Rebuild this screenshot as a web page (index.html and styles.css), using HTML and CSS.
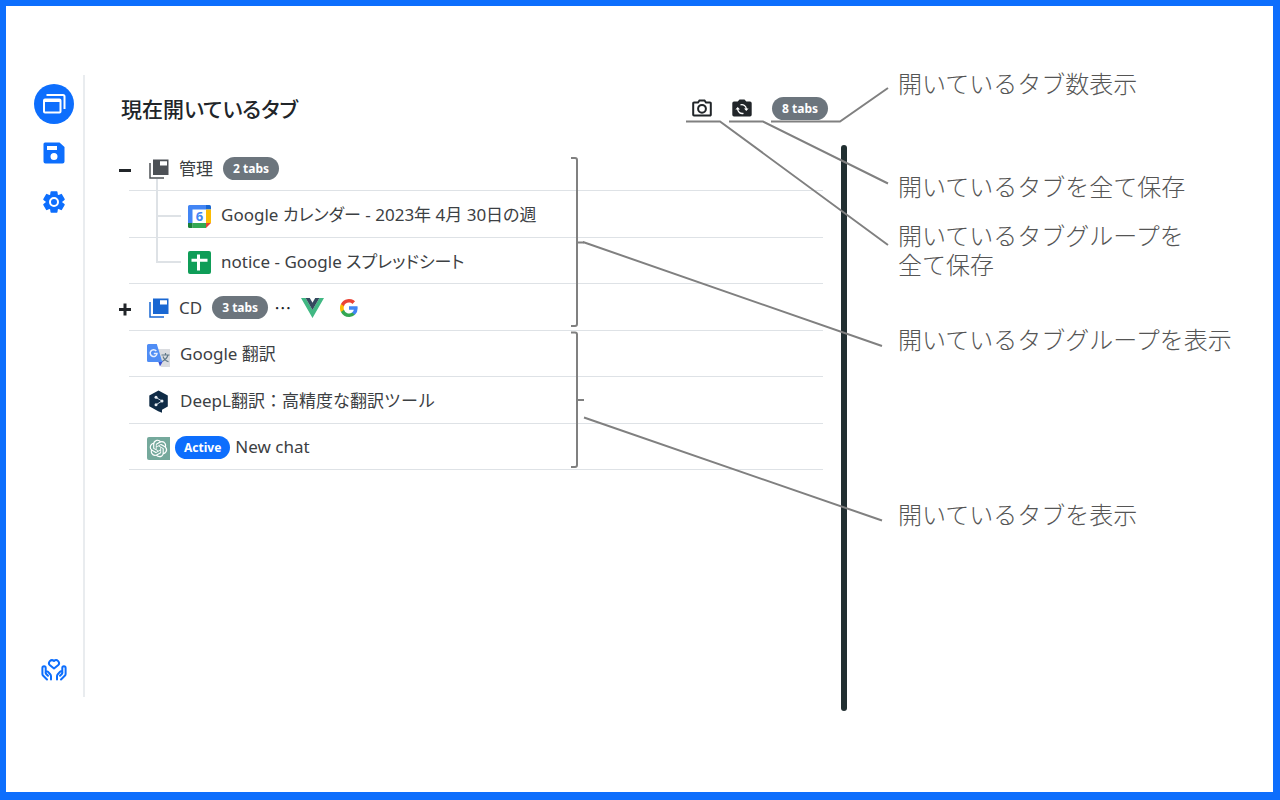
FILE: index.html
```html
<!DOCTYPE html>
<html lang="ja">
<head>
<meta charset="utf-8">
<meta name="viewport" content="width=device-width, initial-scale=1">
<title>現在開いているタブ</title>
<link rel="stylesheet" href="styles.css">
</head>
<body>
<div class="stage">
  <nav class="sidebar" aria-label="メニュー">
    <button class="nav-button nav-button-active" type="button" aria-label="タブ">
      <svg width="24" height="24" viewBox="0 0 24 24" fill="none" stroke="currentColor"><path d="M4.500 3H21a1.500 1.500 0 0 1 1.500 1.500V17" stroke-width="2"/><rect x="2" y="7.500" width="16.500" height="13" rx="1" stroke-width="2"/><path d="M2 8.500h16.500" stroke-width="3"/></svg>
    </button>
    <button class="nav-button" type="button" aria-label="保存">
      <svg width="22" height="22" viewBox="0 0 22 22"><path fill="currentColor" fill-rule="evenodd" d="M2 .500h14.500L21.500 5v14.500a2 2 0 0 1-2 2H2.500a2 2 0 0 1-2-2V2A1.500 1.500 0 0 1 2 .500ZM4 4v4h10V4ZM11 11a3.500 3.500 0 1 0 0 7 3.500 3.500 0 0 0 0-7Z"/></svg>
    </button>
    <button class="nav-button" type="button" aria-label="設定">
      <svg width="24" height="24" viewBox="0 0 24 24"><path fill="currentColor" stroke="currentColor" stroke-width="1.500" stroke-linejoin="round" d="m9.250 22-.4-3.200q-.325-.125-.612-.3-.288-.175-.563-.375L4.700 19.375l-2.750-4.750 2.575-1.950Q4.500 12.500 4.500 12.337v-.675q0-.162.025-.337L1.950 9.375l2.750-4.750 2.975 1.250q.275-.2.575-.375.3-.175.600-.3l.4-3.200h5.500l.4 3.200q.325.125.613.300.287.175.562.375l2.975-1.250 2.750 4.750-2.575 1.950q.025.175.025.337v.675q0 .163-.05.338l2.575 1.950-2.750 4.750-2.950-1.250q-.275.200-.575.375-.3.175-.6.300l-.4 3.200Z"/><circle cx="12" cy="12" r="4" fill="none" stroke="#fff" stroke-width="2"/></svg>
    </button>
    <button class="nav-button nav-button-last" type="button" aria-label="寄付">
      <svg width="28" height="24" viewBox="0 0 28 24" fill="none" stroke="currentColor" stroke-width="2" stroke-linecap="round" stroke-linejoin="round"><path d="M14 10.500 10 7.300A2.900 2.900 0 0 1 14 3a2.900 2.900 0 0 1 4 4.300Z"/><path d="M7 21.500 3 17.500a2 2 0 0 1-.6-1.400V10a1.500 1.500 0 0 1 3.300 0v4.300M11 21.500v-3.300a3 3 0 0 0-.8-2l-2.100-2.300a1.400 1.400 0 0 0-2.100 1.900l2 2M21 21.500l4-4a2 2 0 0 0 .6-1.400V10a1.500 1.500 0 0 0-3.300 0v4.300M17 21.500v-3.300a3 3 0 0 1 .8-2l2.100-2.300a1.400 1.400 0 0 1 2.100 1.900l-2 2"/></svg>
    </button>
  </nav>

  <main class="main">
    <header class="header">
      <h1 class="title">現在開いているタブ</h1>
      <button class="tool" type="button" aria-label="タブグループを全て保存">
        <svg width="20" height="18" viewBox="0 0 20 18" fill="none" stroke="currentColor" stroke-width="2"><path d="M2 3.500h4L7.500 1.500h5L14 3.500h4a.8.800 0 0 1 .8.800v11.400a.8.800 0 0 1-.8.800H2a.8.800 0 0 1-.8-.8V4.300A.8.800 0 0 1 2 3.500Z"/><circle cx="10" cy="9.800" r="3.900"/></svg>
      </button>
      <button class="tool" type="button" aria-label="タブを全て保存">
        <svg width="20" height="18" viewBox="0 0 20 18" fill="none"><path fill="currentColor" d="M2 2.500h3.700L7.500.500h5l1.800 2H18a1.700 1.700 0 0 1 1.700 1.700v11.600a1.700 1.700 0 0 1-1.700 1.700H2A1.700 1.700 0 0 1 .3 15.800V4.200A1.700 1.700 0 0 1 2 2.500Z"/><path d="M8.500 5.800A4.500 4.500 0 0 1 14.300 10M11.500 14.300A4.500 4.500 0 0 1 5.700 10" stroke="#fff" stroke-width="1.300"/><path d="m12 9.500 2.300 2.600 2.300-2.600ZM3.400 10.500l2.300-2.600 2.300 2.600Z" fill="#fff"/></svg>
      </button>
      <span class="badge">8 tabs</span>
    </header>

    <ul class="tabs">
      <li class="row">
        <button class="toggle" type="button" aria-label="閉じる"><svg width="14" height="14" viewBox="0 0 14 14"><path d="M1 7.500h12" stroke="currentColor" stroke-width="3"/></svg></button>
        <svg class="group-icon" width="20" height="20" viewBox="0 0 20 20"><path d="M1 4v15h14" fill="none" stroke="currentColor" stroke-width="1.500"/><path fill="currentColor" fill-rule="evenodd" d="M4 .500h15.500V16H4ZM11 2.200v4.300h7V2.200Z"/></svg>
        <span class="label">管理</span>
        <span class="badge">2 tabs</span>
      </li>
      <li class="row row-child">
        <svg class="favicon" width="23" height="23" viewBox="0 0 23 23"><path fill="#fff" d="M4 4h15v15H4z"/><path fill="#4285f4" d="M1.500 0H18v4.500H4.500V18H0V1.500A1.500 1.500 0 0 1 1.500 0Z"/><path fill="#1967d2" d="M18 0h3.500A1.500 1.500 0 0 1 23 1.500v3h-5Z"/><path fill="#fbbc04" d="M18 4.500h5V18h-5Z"/><path fill="#34a853" d="M4.500 18H18v5H4.500Z"/><path fill="#188038" d="M0 18h4.500v5h-3A1.500 1.500 0 0 1 0 21.500Z"/><path fill="#ea4335" d="M18 18h5l-5 5Z"/><text class="calendar-day" x="11.500" y="16" text-anchor="middle">6</text></svg>
        <a class="label" href="#calendar">Google カレンダー - 2023年 4月 30日の週</a>
      </li>
      <li class="row row-child">
        <svg class="favicon" width="23" height="23" viewBox="0 0 23 23"><rect width="23" height="23" rx="2" fill="#0f9d58"/><path d="M10.500 3.500v16M3.500 9.200h16" stroke="#fff" stroke-width="3"/></svg>
        <a class="label" href="#notice">notice - Google スプレッドシート</a>
      </li>
      <li class="row">
        <button class="toggle" type="button" aria-label="開く"><svg width="14" height="14" viewBox="0 0 14 14"><path d="M1 7.500h12M7 1.500v12" stroke="currentColor" stroke-width="3"/></svg></button>
        <svg class="group-icon group-icon-blue" width="20" height="20" viewBox="0 0 20 20"><path d="M1 4v15h14" fill="none" stroke="currentColor" stroke-width="1.500"/><path fill="currentColor" fill-rule="evenodd" d="M4 .500h15.500V16H4ZM11 2.200v4.300h7V2.200Z"/></svg>
        <span class="label">CD</span>
        <span class="badge">3 tabs</span>
        <span class="more">…</span>
        <svg class="mini" width="23" height="20" viewBox="0 0 23 20"><path fill="#41b883" d="M0 0h4.600l6.900 12 6.900-12H23L11.500 20Z"/><path fill="#34495e" d="M4.600 0h4.200l2.700 4.700L14.200 0h4.200l-6.900 12Z"/></svg>
        <svg class="mini" width="18" height="18" viewBox="0 0 18 18"><path fill="#4285f4" d="M17.640 9.200c0-.64-.06-1.250-.16-1.840H9v3.480h4.840a4.140 4.140 0 0 1-1.800 2.720v2.260h2.920a8.780 8.780 0 0 0 2.680-6.620Z"/><path fill="#34a853" d="M9 18a8.600 8.600 0 0 0 5.960-2.180l-2.920-2.260A5.400 5.400 0 0 1 3.960 10.710h-3v2.330A9 9 0 0 0 9 18Z"/><path fill="#fbbc05" d="M3.960 10.710a5.400 5.400 0 0 1 0-3.420V4.960h-3a9 9 0 0 0 0 8.080Z"/><path fill="#ea4335" d="M9 3.580c1.320 0 2.500.45 3.440 1.350l2.580-2.580A9 9 0 0 0 .96 4.960l3 2.330A5.360 5.360 0 0 1 9 3.580Z"/></svg>
      </li>
      <li class="row row-tab">
        <svg class="favicon" width="23" height="23" viewBox="0 0 23 23"><path fill="#dadce0" d="M10 5h13v18H14Z"/><path d="M14.500 11h8M18.500 9v2M21 11c-.8 3-3 5-5.500 6.200M16 12.500c1 2.500 3 4.500 5.500 5.200" stroke="#607988" stroke-width="1.200" fill="none"/><path fill="#3b50ce" d="M11 17h5l-3 5.500Z"/><path fill="#4f8df5" d="M1.500 0h8.300l5.500 18H1.500A1.500 1.500 0 0 1 0 16.500v-15A1.500 1.500 0 0 1 1.500 0Z"/><path d="M9.300 7A3.400 3.400 0 1 0 10 9.500H6.800" fill="none" stroke="#e8f0fe" stroke-width="1.500"/></svg>
        <a class="label" href="#translate">Google 翻訳</a>
      </li>
      <li class="row row-tab">
        <svg class="favicon" width="23" height="23" viewBox="0 0 23 23"><path fill="#0f2b46" d="m11.500.500 9.300 5v11L15 19.700V22.800l-3.800-1.600L2.300 16.300V5.500Z"/><path d="m9 7.500 6 3.500-6 3.800" fill="none" stroke="#c9d6e2" stroke-width="1"/><g fill="#e6edf3"><circle cx="9" cy="7.300" r="1.500"/><circle cx="15" cy="11" r="1.500"/><circle cx="9" cy="14.800" r="1.500"/></g></svg>
        <a class="label label-full" href="#deepl">DeepL翻訳：高精度な翻訳ツール</a>
      </li>
      <li class="row row-tab">
        <svg class="favicon" width="23" height="23" viewBox="0 0 23 23"><path fill="#75a99c" d="M2 0h21v23H2a2 2 0 0 1-2-2V2a2 2 0 0 1 2-2Z"/><g transform="translate(2.700 2.700) scale(.73)"><path fill="#fff" d="M22.280 9.820a5.980 5.980 0 0 0-.52-4.910 6.050 6.050 0 0 0-6.510-2.900A6.070 6.070 0 0 0 4.980 4.180a5.980 5.980 0 0 0-4 2.900 6.050 6.050 0 0 0 .74 7.100 5.980 5.980 0 0 0 .51 4.910 6.050 6.050 0 0 0 6.520 2.900A5.980 5.980 0 0 0 13.260 24a6.060 6.060 0 0 0 5.770-4.210 5.990 5.990 0 0 0 4-2.900 6.060 6.060 0 0 0-.75-7.070Zm-9.020 12.610a4.480 4.480 0 0 1-2.880-1.040l4.920-2.840a.8.800 0 0 0 .39-.68v-6.740l2.020 1.170v5.630a4.500 4.500 0 0 1-4.450 4.500Zm-9.660-4.130a4.470 4.470 0 0 1-.53-3.010l4.920 2.840a.77.770 0 0 0 .78 0l5.840-3.370v2.330L9.740 19.950a4.500 4.500 0 0 1-6.140-1.650ZM2.340 7.900a4.490 4.490 0 0 1 2.370-1.980v5.680a.77.770 0 0 0 .39.680l5.810 3.350-2.020 1.170-4.830-2.790A4.500 4.500 0 0 1 2.340 7.900Zm16.600 3.850-5.840-3.380 2.010-1.160 4.830 2.790a4.500 4.500 0 0 1-.68 8.100v-5.670a.79.790 0 0 0-.32-.68Zm2.010-3.020-4.910-2.870a.78.780 0 0 0-.79 0L9.410 9.230V6.900l4.860-2.810a4.500 4.500 0 0 1 6.680 4.640ZM8.310 12.860 6.290 11.700V6.070a4.500 4.500 0 0 1 7.380-3.450L8.840 5.460a.8.800 0 0 0-.4.680Zm1.100-2.360L12 9l2.610 1.500v3L12 15l-2.600-1.500Z"/></g></svg>
        <span class="badge badge-active">Active</span>
        <a class="label" href="#chat">New chat</a>
      </li>
    </ul>
  </main>

  <div class="divider"></div>

  <ul class="notes">
    <li class="note">開いているタブ数表示</li>
    <li class="note note-save-tabs">開いているタブを全て保存</li>
    <li class="note note-save-groups">開いているタブグループを<br>全て保存</li>
    <li class="note note-groups">開いているタブグループを表示</li>
    <li class="note note-tabs">開いているタブを表示</li>
  </ul>

  <svg class="callouts" width="720" height="600" viewBox="560 0 720 600" aria-hidden="true">
    <path d="M771 121.500h69L888 88M729 121.500h34L888 183.500M686 121.500h34L888 245M583 242 882 346M584 417.500 882 520.500"/>
    <path d="M571 158h4q2 0 2 2v81.500q0 1 2 1h5M577 242v82q0 2-2 2h-4M571 332.500h4q2 0 2 2v64.500q0 1 2 1h5M577 399v66q0 2-2 2h-4"/>
  </svg>
</div>
</body>
</html>
```

FILE: styles.css
```css
* {
  box-sizing: border-box;
}

body {
  margin: 0;
  background: #fff;
  color: #212529;
  font-family: "Noto Sans", "Noto Sans CJK JP", sans-serif;
  font-size: 17px;
}

.stage {
  position: relative;
  display: flex;
  min-height: 100vh;
  padding: 69px 0 81px 22px;
  border: solid #0d6efd;
  border-width: 6px 7px 8px 6px;
}

button {
  display: flex;
  align-items: center;
  justify-content: center;
  padding: 0;
  border: 0;
  background: none;
  color: inherit;
}

ul {
  margin: 0;
  padding: 0;
  list-style: none;
}

.sidebar {
  display: flex;
  flex-direction: column;
  align-items: center;
  gap: 9px;
  width: 57px;
  margin-bottom: 14px;
  padding: 9px 3px 7px 0;
  border-right: 2px solid #e9ecef;
}

.nav-button {
  width: 40px;
  height: 40px;
  border-radius: 50%;
  color: #0d6efd;
}

.nav-button-active {
  background: #0d6efd;
  color: #fff;
}

.nav-button-last {
  margin-top: auto;
}

.main {
  flex: 1;
  padding: 13px 18px 0 36px;
}

.header {
  display: flex;
  align-items: center;
  gap: 20px;
  height: 40px;
  margin-right: -5px;
}

.title {
  flex: 1;
  margin: 0;
  padding-top: 2px;
  font-size: 21px;
  font-weight: 500;
  line-height: 32px;
  font-feature-settings: "palt";
}

.badge {
  padding: 0 10px;
  border-radius: 12px;
  background: #6c757d;
  color: #fff;
  font-size: 12px;
  font-weight: 700;
  line-height: 23px;
}

.badge-active {
  margin: 0 -5px;
  padding: 0 9px;
  background: #0d6efd;
}

.tabs {
  display: grid;
  grid-auto-rows: 1fr;
  min-height: 325px;
  margin: 17px 0 0 8px;
}

.row {
  position: relative;
  display: flex;
  align-items: center;
  gap: 10px;
  padding-top: 2px;
  border-bottom: 1px solid #dee2e6;
}

.row-tab {
  padding-left: 18px;
}

.row-child {
  padding-left: 59px;
}

.row-child::before {
  content: "";
  position: absolute;
  top: -12px;
  bottom: 20px;
  left: 27px;
  width: 23px;
  border: solid #dee2e6;
  border-width: 0 0 2px 2px;
}

.row-child + .row-child::before {
  top: -22px;
}

.toggle {
  width: 14px;
  height: 14px;
  margin: 2px 7px 0 -11px;
}

.group-icon {
  color: #4d5156;
}

.group-icon-blue {
  color: #1967d2;
}

.favicon {
  margin-top: 2px;
}

.calendar-day {
  fill: #4285f4;
  font-size: 13px;
  font-weight: 700;
}

.label {
  color: #3c4043;
  line-height: 26px;
  text-decoration: none;
  font-feature-settings: "palt";
}

.label-full {
  font-feature-settings: normal;
}

.more {
  margin: 0 0 0 -4px;
  font-family: "Noto Sans CJK JP", sans-serif;
}

.mini {
  margin-right: 6px;
}

.divider {
  width: 6px;
  margin-top: 70px;
  border-radius: 3px;
  background: #212f31;
}

.notes {
  width: 426px;
  padding-left: 51px;
  margin-top: -6px;
  color: #555;
  font-size: 24px;
  font-weight: 300;
  line-height: 29px;
}

.note-save-tabs {
  margin-top: 74px;
}

.note-save-groups {
  margin-top: 20px;
}

.note-groups {
  margin-top: 46px;
}

.note-tabs {
  margin-top: 146px;
}

.callouts {
  position: absolute;
  top: -6px;
  right: -7px;
  fill: none;
  stroke: #808080;
  stroke-width: 2;
  pointer-events: none;
}
```
